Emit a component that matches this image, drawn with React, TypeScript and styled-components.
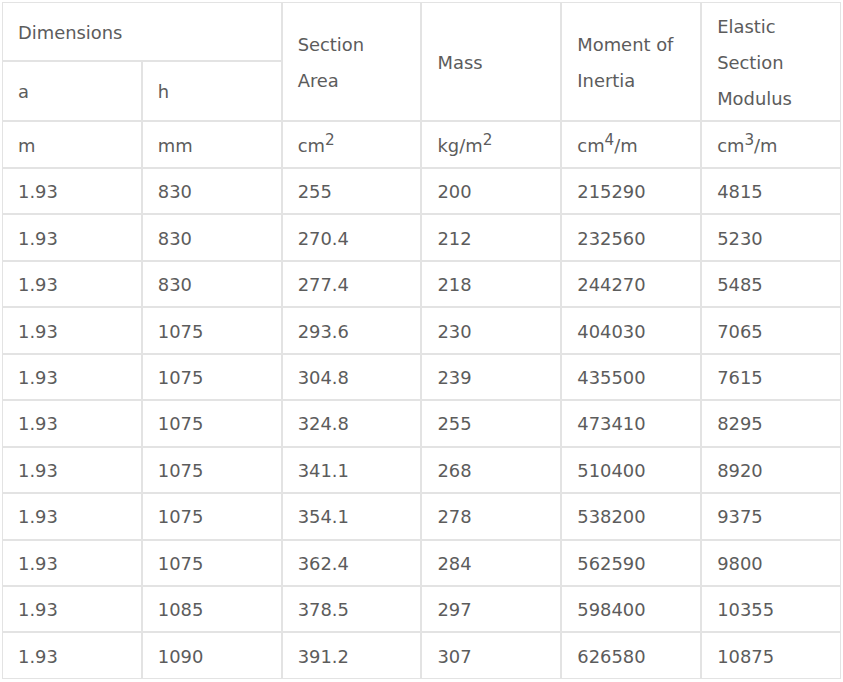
import React from "react";
import styled, { createGlobalStyle } from "styled-components";

const GlobalStyle = createGlobalStyle`
  html, body { margin: 0; padding: 0; background: #ffffff; }
  body { font-family: "DejaVu Sans", Verdana, sans-serif; }
`;

const Page = styled.div`
  padding: 2px;
`;

const Table = styled.table`
  width: 839px;
  table-layout: fixed;
  border-collapse: separate;
  border-spacing: 0;
  color: #5c5c5c;
  font-size: 17.9px;
`;

const HeadCell = styled.th`
  border: 1px solid #e3e3e3;
  padding: 2px 14px 0 15px;
  text-align: left;
  font-weight: normal;
  vertical-align: middle;
  line-height: 36px;
`;

const Cell = styled.td`
  border: 1px solid #e3e3e3;
  padding: 2px 14px 0 15px;
  text-align: left;
  vertical-align: middle;
  line-height: 22px;
  white-space: nowrap;
`;

const Row = styled.tr<{ $h: number }>`
  height: ${(p) => p.$h}px;
`;

const Sup = styled.sup`
  font-size: 0.85em;
  line-height: 0;
  vertical-align: 0.45em;
`;

const data: string[][] = [
  ["1.93", "830", "255", "200", "215290", "4815"],
  ["1.93", "830", "270.4", "212", "232560", "5230"],
  ["1.93", "830", "277.4", "218", "244270", "5485"],
  ["1.93", "1075", "293.6", "230", "404030", "7065"],
  ["1.93", "1075", "304.8", "239", "435500", "7615"],
  ["1.93", "1075", "324.8", "255", "473410", "8295"],
  ["1.93", "1075", "341.1", "268", "510400", "8920"],
  ["1.93", "1075", "354.1", "278", "538200", "9375"],
  ["1.93", "1075", "362.4", "284", "562590", "9800"],
  ["1.93", "1085", "378.5", "297", "598400", "10355"],
  ["1.93", "1090", "391.2", "307", "626580", "10875"],
];

export default function App() {
  return (
    <>
      <GlobalStyle />
      <Page>
        <Table>
          <thead>
            <Row $h={59}>
              <HeadCell colSpan={2}>Dimensions</HeadCell>
              <HeadCell rowSpan={2}>Section<br />Area</HeadCell>
              <HeadCell rowSpan={2}>Mass</HeadCell>
              <HeadCell rowSpan={2}>Moment of<br />Inertia</HeadCell>
              <HeadCell rowSpan={2}>Elastic<br />Section<br />Modulus</HeadCell>
            </Row>
            <Row $h={60}>
              <HeadCell>a</HeadCell>
              <HeadCell>h</HeadCell>
            </Row>
          </thead>
          <tbody>
            <Row $h={47}>
              <Cell>m</Cell>
              <Cell>mm</Cell>
              <Cell>cm<Sup>2</Sup></Cell>
              <Cell>kg/m<Sup>2</Sup></Cell>
              <Cell>cm<Sup>4</Sup>/m</Cell>
              <Cell>cm<Sup>3</Sup>/m</Cell>
            </Row>
            {data.map((r, i) => (
              <Row key={i} $h={46.45}>
                {r.map((v, j) => (
                  <Cell key={j}>{v}</Cell>
                ))}
              </Row>
            ))}
          </tbody>
        </Table>
      </Page>
    </>
  );
}
